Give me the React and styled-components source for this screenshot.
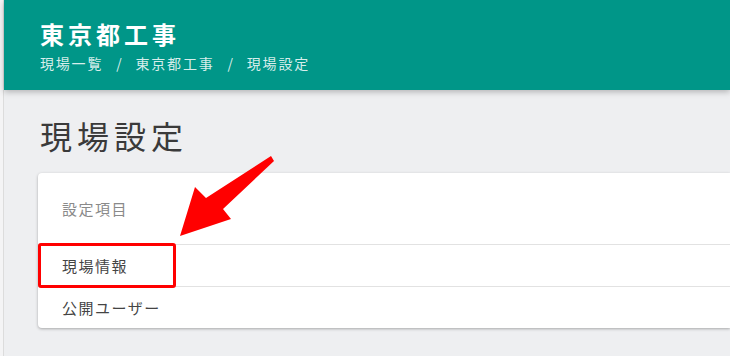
import React from 'react';
import styled, { createGlobalStyle } from 'styled-components';

const GlobalStyle = createGlobalStyle`
    html, body {
        margin: 0;
        padding: 0;
        width: 730px;
        height: 356px;
        overflow: hidden;
        background: #eeeff1;
        font-family: "Noto Sans CJK JP", "Noto Sans", sans-serif;
    }
`

const App = () => {
    return(
        <Layout>
            <GlobalStyle />
            <Rail />
            <Main>
                <Header>
                    <h1>東京都工事</h1>
                    <Breadcrumb>
                        <span>現場一覧</span>
                        <Sep>/</Sep>
                        <span>東京都工事</span>
                        <Sep>/</Sep>
                        <span>現場設定</span>
                    </Breadcrumb>
                </Header>
                <Content>
                    <PageTitle>現場設定</PageTitle>
                    <Card>
                        <CardHead>設定項目</CardHead>
                        <Item highlighted>
                            現場情報
                        </Item>
                        <Item>公開ユーザー</Item>
                    </Card>
                    <Arrow width="100" height="90" viewBox="0 0 100 90">
                        <polygon points="96,2 99,7 48,55 56,65 5,82 20,33 31,44" fill="#ff0000" />
                    </Arrow>
                </Content>
            </Main>
        </Layout>
    )
}

const Layout = styled.div`
    display: flex;
    width: 730px;
    height: 356px;
`

const Rail = styled.div`
    width: 3px;
    flex-shrink: 0;
    background: #f4f4f5;
    border-right: 1px solid #dcdcdc;
`

const Main = styled.div`
    flex: 1;
    display: flex;
    flex-direction: column;
    min-width: 0;
`

const Header = styled.header`
    height: 90px;
    box-sizing: border-box;
    background: #009688;
    color: #ffffff;
    padding: 17px 0 0 36px;
    box-shadow: 0 2px 6px rgba(0, 0, 0, 0.25);
    position: relative;
    z-index: 1;

    h1{
        margin: 0;
        font-size: 24px;
        line-height: 34px;
        font-weight: 700;
        letter-spacing: 4px;
    }
`

const Breadcrumb = styled.div`
    display: flex;
    font-size: 14px;
    line-height: 20px;
    margin-top: 2px;
    letter-spacing: 1.8px;
    color: rgba(255, 255, 255, 0.85);
`

const Sep = styled.span`
    margin: 0 12px 0 13px;
`

const Content = styled.div`
    position: relative;
    flex: 1;
    padding: 25px 0 0 34px;
`

const PageTitle = styled.h2`
    margin: 0 0 18px 2px;
    font-size: 32px;
    line-height: 40px;
    font-weight: 400;
    letter-spacing: 5px;
    color: #3a3a3a;
`

const Card = styled.div`
    background: #ffffff;
    border-radius: 4px 0 0 4px;
    box-shadow: 0 1px 3px rgba(0, 0, 0, 0.3);
`

const CardHead = styled.div`
    height: 72px;
    box-sizing: border-box;
    padding-left: 24px;
    display: flex;
    align-items: center;
    font-size: 15px;
    letter-spacing: 1.5px;
    color: #8a8a8a;
    border-bottom: 1px solid #e2e2e2;
`

const Item = styled.div`
    position: relative;
    height: 42px;
    box-sizing: border-box;
    padding-left: 24px;
    display: flex;
    align-items: center;
    font-size: 15px;
    letter-spacing: 1.5px;
    color: #444444;
    border-bottom: 1px solid #e2e2e2;

    &:last-child{
        border-bottom: none;
        height: 41px;
    }

    &::after{
        content: '';
        display: ${props => props.highlighted ? 'block' : 'none'};
        position: absolute;
        left: 0;
        top: -2px;
        width: 138px;
        height: 45px;
        box-sizing: border-box;
        border: 3px solid #ff0000;
        border-radius: 3px;
    }
`

const Arrow = styled.svg`
    position: absolute;
    left: 171px;
    top: 64px;
`

export default App;
